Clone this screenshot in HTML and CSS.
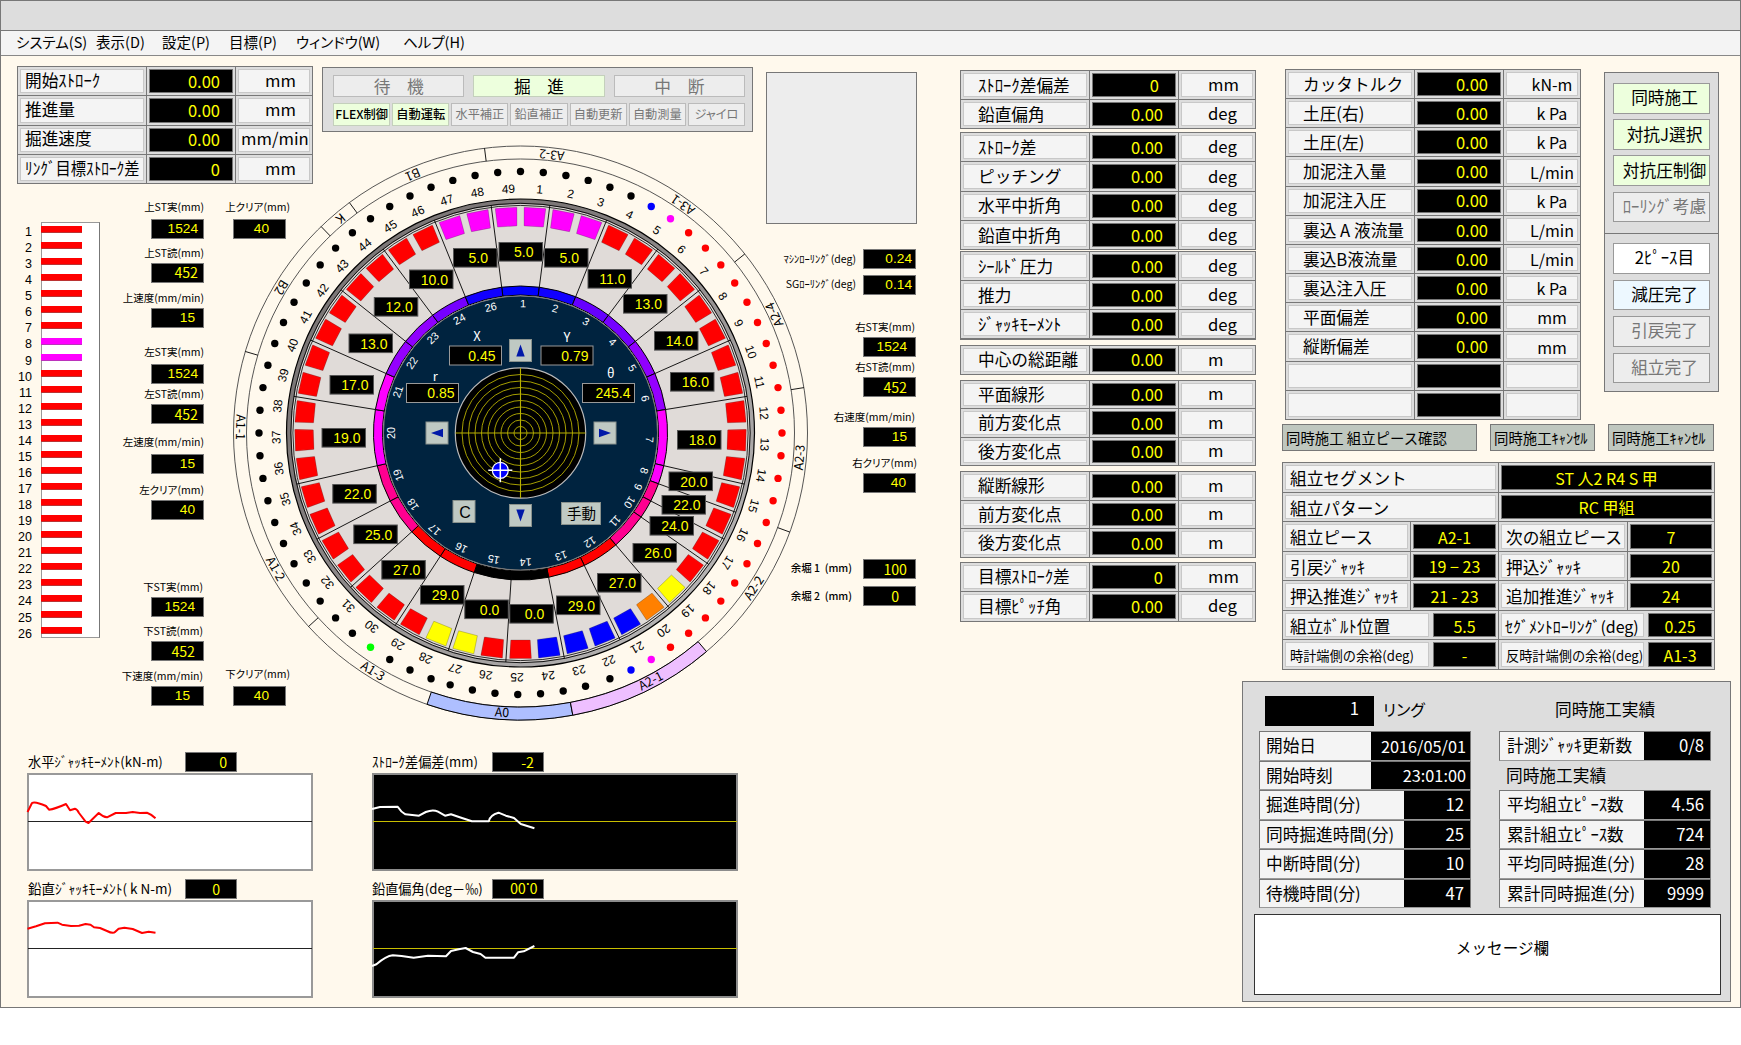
FILE: index.html
```html
<!DOCTYPE html>
<html lang="ja">
<head>
<meta charset="utf-8">
<title>掘進管理</title>
<link rel="stylesheet" href="styles.css">
</head>
<body>
<div class="app">
  <div class="titlebar"></div>
  <nav class="menubar">
    <span>システム(S)</span><span>表示(D)</span><span>設定(P)</span><span>目標(P)</span><span>ウィンドウ(W)</span><span>ヘルプ(H)</span>
  </nav>
  <main class="main">
    <section class="machine">
      <div class="top">
        <div class="table stroke-table">
          <div class="lbl">開始ｽﾄﾛｰｸ</div><div class="val">0.00</div><div class="unit">mm</div>
          <div class="lbl">推進量</div><div class="val">0.00</div><div class="unit">mm</div>
          <div class="lbl">掘進速度</div><div class="val">0.00</div><div class="unit wide">mm/min</div>
          <div class="lbl"><span class="condensed">ﾘﾝｸﾞ目標ｽﾄﾛｰｸ差</span></div><div class="val">0</div><div class="unit">mm</div>
        </div>
        <div class="status">
          <div class="status-modes">
            <div class="lamp">待　機</div><div class="lamp on">掘　進</div><div class="lamp">中　断</div>
          </div>
          <div class="status-flags">
            <div class="lamp on">FLEX制御</div><div class="lamp on">自動運転</div><div class="lamp">水平補正</div><div class="lamp">鉛直補正</div><div class="lamp">自動更新</div><div class="lamp">自動測量</div><div class="lamp">ジャイロ</div>
          </div>
        </div>
        <div class="blank-panel"></div>
      </div>
      <div class="middle">
        <div class="jacks">
          <div class="jack-numbers" id="jack-numbers"></div>
          <div class="jack-bars" id="jack-bars"></div>
        </div>
        <div class="readouts left">
          <div class="readout up"><label>上ST実(mm)</label><output>1524</output></div>
          <div class="readout"><label>上ST読(mm)</label><output class="alt">452</output></div>
          <div class="readout"><label>上速度(mm/min)</label><output class="in8">15</output></div>
          <div class="readout up"><label>左ST実(mm)</label><output>1524</output></div>
          <div class="readout"><label>左ST読(mm)</label><output class="alt">452</output></div>
          <div class="readout up"><label>左速度(mm/min)</label><output class="in8">15</output></div>
          <div class="readout"><label>左クリア(mm)</label><output class="in8">40</output></div>
          <div class="readout low"><label>下ST実(mm)</label><output class="in8">1524</output></div>
          <div class="readout low"><label>下ST読(mm)</label><output class="alt in8">452</output></div>
          <div class="readout low"><label>下速度(mm/min)</label><output class="in13">15</output></div>
        </div>
        <div class="readouts clear">
          <div class="readout up"><label>上クリア(mm)</label><output class="in17">40</output></div>
          <div class="readout up"><label>下クリア(mm)</label><output class="in17">40</output></div>
        </div>
        <svg class="dial" id="dial" width="576" height="576" viewBox="-288.5 -288 576 576"></svg>
        <div class="readouts right">
          <div class="inline-readout"><label>ﾏｼﾝﾛｰﾘﾝｸﾞ(deg)</label><output class="in4">0.24</output></div>
          <div class="inline-readout"><label>SGﾛｰﾘﾝｸﾞ(deg)</label><output class="in4">0.14</output></div>
          <div class="readout"><label>右ST実(mm)</label><output class="in8">1524</output></div>
          <div class="readout"><label>右ST読(mm)</label><output class="alt in8">452</output></div>
          <div class="readout"><label>右速度(mm/min)</label><output class="in8">15</output></div>
          <div class="readout far"><label>右クリア(mm)</label><output class="in10">40</output></div>
          <div class="inline-readout over"><label>余堀 1&nbsp; (mm)</label><output class="alt in8">100</output></div>
          <div class="inline-readout over"><label>余堀 2&nbsp; (mm)</label><output class="alt in17">0</output></div>
        </div>
      </div>
      <div class="charts">
        <figure class="chart light">
          <figcaption><span>水平ｼﾞｬｯｷﾓｰﾒﾝﾄ(kN-m)</span><output class="alt in10">0</output></figcaption>
          <svg viewBox="2 2 282 94"><path class="zero" d="M1 48.5H285"/><path class="trace" d="M.5 39L5 30Q8 28 19 33L22 36.7Q28 36 39 31L43 37.3L48 35.7Q50 36 52 40L58.6 48.7L61.5 50L71.7 40Q76 44 80 44.3L88.7 40H99L105.7 39L113 40L120 39.7Q124 41 128.5 45.3"/></svg>
        </figure>
        <figure class="chart dark">
          <figcaption><span>ｽﾄﾛｰｸ差偏差(mm)</span><output class="alt in10">-2</output></figcaption>
          <svg viewBox="2 2 362 94"><path class="zero" d="M1 48.5H365"/><path class="trace" d="M0 36L8 34L25.7 33.7Q29 39 33.4 41.3L47 42.7L53.8 39Q61 36 66 38.7L73 42.7L79 41.3L87.7 44.3L99.9 48.3H116.8Q118 42 126.5 39.7L133.8 42.7L142 45L148.8 51L162.4 55.3"/></svg>
        </figure>
        <figure class="chart light">
          <figcaption><span class="loose">鉛直ｼﾞｬｯｷﾓｰﾒﾝﾄ( k N-m)</span><output class="alt in17">0</output></figcaption>
          <svg viewBox="2 2 282 94"><path class="zero" d="M1 48.5H285"/><path class="trace" d="M.5 28.7L9 26.3L18 23.3L30.5 22.7L35 24.7L44 26L52 25.7L58.6 24L63.5 24.7L67 27.3L73 28L80 31Q86 34 88 32L91.6 28.7L97.4 27.7L105.7 29L115 33L121.7 31.7L128.5 32.7"/></svg>
        </figure>
        <figure class="chart dark">
          <figcaption><span>鉛直偏角(deg－‰)</span><output class="alt flipped">0.00</output></figcaption>
          <svg viewBox="2 2 362 94"><path class="zero" d="M1 48.5H365"/><path class="trace" d="M0 66L4.4 64.3Q14 56 20.8 55.3L29.6 56L41.7 57.7L56 55.7L74 56.3L79 51L86.8 49.3L93.6 48L101 52L108.6 54L113.4 57.7H142L146 52.3L151.7 51.3L162.4 46"/></svg>
        </figure>
      </div>
    </section>

    <section class="survey">
      <div class="table">
        <div class="lbl">ｽﾄﾛｰｸ差偏差</div><div class="val in19">0</div><div class="unit">mm</div>
        <div class="lbl">鉛直偏角</div><div class="val">0.00</div><div class="unit">deg</div>
      </div>
      <div class="table">
        <div class="lbl">ｽﾄﾛｰｸ差</div><div class="val">0.00</div><div class="unit">deg</div>
        <div class="lbl">ピッチング</div><div class="val">0.00</div><div class="unit">deg</div>
        <div class="lbl">水平中折角</div><div class="val">0.00</div><div class="unit">deg</div>
        <div class="lbl">鉛直中折角</div><div class="val">0.00</div><div class="unit">deg</div>
      </div>
      <div class="table">
        <div class="lbl">ｼｰﾙﾄﾞ圧力</div><div class="val">0.00</div><div class="unit">deg</div>
        <div class="lbl">推力</div><div class="val">0.00</div><div class="unit">deg</div>
        <div class="lbl">ｼﾞｬｯｷﾓｰﾒﾝﾄ</div><div class="val">0.00</div><div class="unit">deg</div>
      </div>
      <div class="table">
        <div class="lbl">中心の総距離</div><div class="val">0.00</div><div class="unit">m</div>
      </div>
      <div class="table">
        <div class="lbl">平面線形</div><div class="val">0.00</div><div class="unit">m</div>
        <div class="lbl">前方変化点</div><div class="val">0.00</div><div class="unit">m</div>
        <div class="lbl">後方変化点</div><div class="val">0.00</div><div class="unit">m</div>
      </div>
      <div class="table">
        <div class="lbl">縦断線形</div><div class="val">0.00</div><div class="unit">m</div>
        <div class="lbl">前方変化点</div><div class="val">0.00</div><div class="unit">m</div>
        <div class="lbl">後方変化点</div><div class="val">0.00</div><div class="unit">m</div>
      </div>
      <div class="table">
        <div class="lbl">目標ｽﾄﾛｰｸ差</div><div class="val">0</div><div class="unit">mm</div>
        <div class="lbl">目標ﾋﾟｯﾁ角</div><div class="val">0.00</div><div class="unit">deg</div>
      </div>
    </section>

    <section class="process">
      <div class="process-top">
        <div class="table cutter-table">
          <div class="lbl">カッタトルク</div><div class="val">0.00</div><div class="unit">kN-m</div>
          <div class="lbl">土圧(右)</div><div class="val">0.00</div><div class="unit">k Pa</div>
          <div class="lbl">土圧(左)</div><div class="val">0.00</div><div class="unit">k Pa</div>
          <div class="lbl">加泥注入量</div><div class="val">0.00</div><div class="unit">L/min</div>
          <div class="lbl">加泥注入圧</div><div class="val">0.00</div><div class="unit">k Pa</div>
          <div class="lbl">裏込 A 液流量</div><div class="val">0.00</div><div class="unit">L/min</div>
          <div class="lbl">裏込B液流量</div><div class="val">0.00</div><div class="unit">L/min</div>
          <div class="lbl">裏込注入圧</div><div class="val">0.00</div><div class="unit">k Pa</div>
          <div class="lbl">平面偏差</div><div class="val">0.00</div><div class="unit">mm</div>
          <div class="lbl">縦断偏差</div><div class="val">0.00</div><div class="unit">mm</div>
          <div class="lbl"></div><div class="val"></div><div class="unit"></div>
          <div class="lbl"></div><div class="val"></div><div class="unit"></div>
        </div>
        <div class="switches">
          <div class="switch-group">
            <div class="switch on">同時施工</div>
            <div class="switch on">対抗J選択</div>
            <div class="switch on">対抗圧制御</div>
            <div class="switch">ﾛｰﾘﾝｸﾞ考慮</div>
          </div>
          <div class="switch-group second">
            <div class="switch piece">2ﾋﾟｰｽ目</div>
            <div class="switch done">減圧完了</div>
            <div class="switch">引戻完了</div>
            <div class="switch">組立完了</div>
          </div>
        </div>
      </div>
      <div class="actions">
        <div class="action">同時施工 組立ピース確認</div>
        <div class="action">同時施工ｷｬﾝｾﾙ</div>
        <div class="action">同時施工ｷｬﾝｾﾙ</div>
      </div>
      <div class="assembly">
        <div class="arow wide"><div class="lbl">組立セグメント</div><div class="val">ST 人2 R4 S 甲</div></div>
        <div class="arow wide"><div class="lbl">組立パターン</div><div class="val">RC 甲組</div></div>
        <div class="arow"><div class="lbl">組立ピース</div><div class="val">A2-1</div><div class="lbl">次の組立ピース</div><div class="val">7</div></div>
        <div class="arow"><div class="lbl">引戻ｼﾞｬｯｷ</div><div class="val">19 − 23</div><div class="lbl">押込ｼﾞｬｯｷ</div><div class="val">20</div></div>
        <div class="arow"><div class="lbl">押込推進ｼﾞｬｯｷ</div><div class="val">21 - 23</div><div class="lbl">追加推進ｼﾞｬｯｷ</div><div class="val">24</div></div>
        <div class="arow long"><div class="lbl">組立ﾎﾞﾙﾄ位置</div><div class="val">5.5</div><div class="lbl tight">ｾｸﾞﾒﾝﾄﾛｰﾘﾝｸﾞ(deg)</div><div class="val">0.25</div></div>
        <div class="arow long"><div class="lbl small">時計端側の余裕(deg)</div><div class="val">-</div><div class="lbl small">反時計端側の余裕(deg)</div><div class="val">A1-3</div></div>
      </div>
      <div class="results">
        <div class="ring-head">
          <output class="ring-no">1</output><span class="ring-unit">リング</span><span class="ring-title">同時施工実績</span>
        </div>
        <div class="result-cols">
          <div class="rtable left">
            <div class="rrow date"><span>開始日</span><output>2016/05/01</output></div>
            <div class="rrow date"><span>開始時刻</span><output>23:01:00</output></div>
            <div class="rrow"><span>掘進時間(分)</span><output>12</output></div>
            <div class="rrow"><span>同時掘進時間(分)</span><output>25</output></div>
            <div class="rrow"><span>中断時間(分)</span><output>10</output></div>
            <div class="rrow"><span>待機時間(分)</span><output>47</output></div>
          </div>
          <div class="rtable right">
            <div class="rrow"><span>計測ｼﾞｬｯｷ更新数</span><output>0/8</output></div>
            <div class="rhead">同時施工実績</div>
            <div class="rrow"><span>平均組立ﾋﾟｰｽ数</span><output>4.56</output></div>
            <div class="rrow"><span>累計組立ﾋﾟｰｽ数</span><output>724</output></div>
            <div class="rrow"><span>平均同時掘進(分)</span><output>28</output></div>
            <div class="rrow"><span>累計同時掘進(分)</span><output>9999</output></div>
          </div>
        </div>
        <div class="message">メッセージ欄</div>
      </div>
    </section>
  </main>
</div>
<script src="dial.js"></script>
</body>
</html>
```
FILE: styles.css
```css
* { box-sizing: border-box; }

body {
  margin: 0;
  background: #fff;
  color: #000;
  font: 16.7px/1 "Noto Sans CJK JP", "Noto Sans", sans-serif;
}

.app {
  width: 1741px;
  height: 1008px;
  overflow: hidden;
  background: #fff9ed;
  border: 1px solid #777;
}

.titlebar { height: 30px; background: #ddd; border-bottom: 1px solid #777; }

.menubar {
  display: grid;
  grid-template-columns: 80px 66px 67px 67px 107px 80px;
  align-items: center;
  height: 25px;
  padding: 0 0 2px 15px;
  background: #f4f4f4;
  border-bottom: 1px solid #888;
  font-size: 14.5px;
  white-space: nowrap;
  font-feature-settings: "palt";
}

.main { display: flex; align-items: flex-start; height: 951px; }

/* label / value / unit tables */
.table {
  display: grid;
  grid-template-columns: 128px 88px 76px;
  grid-auto-rows: 1fr;
  gap: 1px;
  width: 296px;
  background: #777;
  border: 1px solid #777;
}
.lbl, .val, .unit {
  display: flex;
  align-items: center;
  min-width: 0;
  border: 2px solid #ddd;
  background: #f4f4f4;
  box-shadow: inset 0 0 0 1px #c8c8c8;
  white-space: nowrap;
}
.lbl { padding-left: 15px; }
.val {
  justify-content: flex-end;
  padding-right: 13px;
  background: #000;
  box-shadow: inset 0 0 0 1px #777;
  color: #ff0;
  font-size: 16.5px;
}
.val.in19 { padding-right: 17px; }
.unit { padding-left: 27px; }

/* left part */
.machine { width: 959px; padding-top: 10px; }
.top { display: flex; align-items: flex-start; height: 118px; padding-left: 16px; }
.stroke-table { height: 118px; }
.stroke-table .lbl { padding: 0 0 2px 5px; }
.stroke-table .unit { padding-bottom: 2px; }
.stroke-table .unit.wide { padding-left: 3px; }
.condensed { transform: scaleX(.915); transform-origin: left center; }

.status {
  width: 431px;
  height: 65px;
  margin: 1px 0 0 9px;
  padding: 7px 7px 0 10px;
  background: #ddd;
  border: 1px solid #777;
}
.status-modes { display: flex; gap: 9px; }
.status-modes .lamp { flex: 1; height: 22px; }
.status-flags { display: flex; gap: 2px; margin-top: 6px; font-size: 12.2px; }
.status-flags .lamp { flex: 1; height: 23px; font-feature-settings: "palt"; }
.lamp {
  display: flex;
  align-items: center;
  justify-content: center;
  min-width: 0;
  background: #ededed;
  border: 1px solid #bbb;
  color: #777;
  white-space: nowrap;
}
.lamp.on { background: #edffdd; color: #000; border-color: #c4d0bc; }
.status-flags .lamp.on { font-weight: 500; }

.blank-panel {
  width: 151px;
  height: 152px;
  margin: 6px 0 0 13px;
  background: #ededed;
  border: 1px solid #777;
}

.middle { display: flex; align-items: flex-start; height: 568px; padding-left: 16px; }
.jacks { display: flex; margin-top: 38px; width: 83px; }
.jack-numbers {
  width: 24px;
  padding: 2px 9px 0 0;
  text-align: right;
  font: 12.5px/16.06px "Liberation Sans", sans-serif;
}
.jack-bars { width: 59px; height: 416px; background: #fff; border: 1px solid #999; border-right-color: #777; }
.jack-bars div { height: 16.06px; padding-top: 3px; }
.jack-bars i { display: block; width: 41px; height: 7px; margin-left: -1px; background: #f00; border-bottom: 1px solid #b33; }
.jack-bars i.opp { background: #f0f; border-color: #b3b; }

.readouts { display: grid; align-content: start; font-size: 10.5px; }
.readouts label { white-space: nowrap; }
.readout { display: flex; flex-direction: column; align-items: flex-end; gap: 3px; height: 37px; }
.readout label { height: 14px; line-height: 13px; font-feature-settings: "palt"; }
.readout.up label { line-height: 10px; }
output { white-space: nowrap; }
.readouts output, .chart output {
  display: flex;
  align-items: center;
  justify-content: flex-end;
  width: 53px;
  height: 20px;
  padding-right: 5px;
  background: #000;
  border: 1px solid #777;
  color: #ff0;
  font: 13.7px/1 "Liberation Sans", sans-serif;
}
.readouts output.alt, .chart output.alt { font-family: "Noto Sans CJK JP", sans-serif; font-size: 14.2px; }
.readouts output.in4 { padding-right: 3px; }
.readouts output.in8 { padding-right: 8px; }
.readouts output.in10, .chart output.in10 { padding-right: 9px; }
.readouts output.in13 { padding-right: 13px; }
.readouts output.in17, .chart output.in17 { padding-right: 16px; }

.readouts.left {
  width: 104px;
  margin: 18px 1px 0 0;
  grid-template-rows: 43.5px 45.5px 55.5px 40.5px 49.5px 46px 97.5px 44px 45px 37px;
}
.readouts.left .low label { margin-right: 1px; }
.readouts.clear { width: 85px; margin-top: 18px; grid-template-rows: 467px 37px; }
.readouts.clear output { margin-right: 4px; }
.dial { flex: none; margin: -39px 0 0 -58px; font-family: "Liberation Sans", sans-serif; }
.readouts.right {
  width: 140px;
  margin: 65px 0 0 -32px;
  grid-template-rows: 25.5px 45.5px 40px 50px 46px 102.7px 27.3px 20px;
}
.readouts.right .readout label { margin-right: 1px; }
.readouts.right .far label { margin-right: -1px; }
.inline-readout { display: flex; align-items: center; justify-content: flex-end; gap: 7px; height: 20px; }
.inline-readout.over { gap: 11px; font-weight: 500; }

.charts {
  display: grid;
  grid-template-columns: 286px 366px;
  column-gap: 59px;
  row-gap: 8px;
  padding-left: 26px;
}
.chart { margin: 0; }
.chart figcaption { display: flex; align-items: center; height: 20px; margin-bottom: 1px; font-size: 13.2px; white-space: nowrap; }
.chart figcaption span { width: 158px; padding-left: 1px; }
.chart figcaption .loose { font-size: 13.5px; }
.chart.dark figcaption span { width: 120px; padding-left: 0; }
.chart output { width: 52px; }
.chart output.flipped { transform: rotate(180deg); padding-right: 17px; }
.chart svg { display: block; width: 100%; height: 98px; border: 2px solid #999; background: #fff; overflow: visible; }
.chart.dark svg { background: #000; border-color: #8c8c8c; }
.zero { stroke: #222; stroke-width: 1.2; fill: none; }
.dark .zero { stroke: #c8be00; }
.trace { fill: none; stroke: #f00; stroke-width: 2; stroke-linejoin: round; }
.dark .trace { stroke: #fff; }

/* survey column */
.survey { width: 296px; padding-top: 14px; }
.survey .table { margin-bottom: 4px; height: 30px; }
.survey .table:nth-child(1) { height: 59px; margin-bottom: 3px; }
.survey .table:nth-child(2) { height: 118px; margin-bottom: 1px; }
.survey .table:nth-child(3) { height: 88.5px; margin-bottom: 5px; }
.survey .table:nth-child(4) { margin-bottom: 5px; }
.survey .table:nth-child(5) { height: 86.5px; margin-bottom: 5px; }
.survey .table:nth-child(6) { height: 86.5px; margin-bottom: 4px; }
.survey .table:nth-child(7) { height: 60px; }
.survey .unit { padding-bottom: 1px; }

/* right part */
.process { width: 450px; margin-left: 26px; padding-top: 13px; }
.process-top { display: flex; align-items: flex-start; padding-left: 3px; }
.cutter-table { height: 351px; }
.cutter-table .unit { justify-content: center; padding-left: 20px; font-size: 16px; }

.switches { width: 115px; margin: 3px 0 0 23px; background: #ddd; border: 1px solid #777; height: 320px; }
.switch-group { display: flex; flex-direction: column; gap: 5.7px; padding: 10px 8px; height: 160px; }
.switch-group.second { border-top: 1px solid #777; padding-top: 9px; gap: 6px; }
.switch {
  display: flex;
  align-items: center;
  justify-content: center;
  flex: none;
  height: 30.5px;
  padding: 0 0 1px 6px;
  background: #ededed;
  border: 1px solid #999;
  color: #777;
  white-space: nowrap;
}
.switch.on { background: #edffdd; color: #000; }
.switch.piece { background: #fff; color: #000; }
.switch.done { background: #edf8ff; color: #000; }

.actions { display: grid; grid-template-columns: 195px 105px 106px; gap: 13px; margin-top: 4px; }
.actions .action {
  height: 27px;
  padding-left: 3px;
  line-height: 25px;
  font-size: 14.4px;
  white-space: nowrap;
  background: #bfc7bf;
  border: 1px solid #777;
}

.assembly {
  display: grid;
  grid-auto-rows: 1fr;
  gap: 1px;
  width: 433px;
  height: 208px;
  margin-top: 11px;
  background: #777;
  border: 1px solid #777;
}
.arow { display: grid; grid-template-columns: 127px 87px 128px 86px; gap: 1px; }
.arow.wide { grid-template-columns: 215px 215px; }
.assembly .lbl { padding: 2px 0 0 5px; }
.assembly .val { justify-content: center; padding: 1px 0 0; font-size: 16px; }
.arow.long { column-gap: 0; grid-template-columns: 148px 67px 148px 68px; }
.arow.long .lbl:nth-child(3) { margin-left: 1px; }
.assembly .lbl.small { font-size: 13.2px; }
.assembly .lbl.tight { font-size: 16px; padding-left: 4px; letter-spacing: -.05px; }

.results {
  width: 489px;
  height: 321px;
  margin: 11px 0 0 -40px;
  padding: 14px 0 0 11px;
  background: #ddd;
  border: 1px solid #777;
}
.ring-head { display: flex; align-items: center; height: 30px; padding-left: 11px; }
.ring-no { width: 109px; height: 30px; padding: 4px 15px 0 0; text-align: right; background: #000; color: #fff; }
.ring-unit { width: 181px; padding: 0 0 4px 9px; font-feature-settings: "palt"; font-size: 16px; }
.ring-title { padding-bottom: 4px; }
.result-cols { display: flex; gap: 28px; margin: 5px 0 0 5px; }
.rtable { display: grid; grid-auto-rows: 29.5px; width: 212px; }
.rrow { display: grid; grid-template-columns: 144px 1fr; border: 1px solid #777; border-bottom-color: #999; background: #f4f4f4; }
.rrow.date { grid-template-columns: 111px 1fr; }
.rtable span, .rhead { display: flex; align-items: center; padding-left: 7px; white-space: nowrap; }
.rtable.left span { padding-left: 6px; }
.rtable output { display: flex; align-items: center; justify-content: flex-end; padding-right: 6px; background: #000; color: #fff; }
.rtable .date output { padding-right: 4px; font-size: 16.3px; }
.message {
  display: flex;
  align-items: center;
  justify-content: center;
  width: 467px;
  height: 81px;
  margin: 6px 0 0 0;
  padding: 0 0 13px 30px;
  background: #fff;
  border: 1px solid #333;
  font-size: 15.6px;
}

/* dial */
.dial .glyph-jp { font-family: "Noto Sans CJK JP", sans-serif; }
```
FILE: dial.js
```js
// Jack stroke bars
const numbers = document.getElementById('jack-numbers');
const bars = document.getElementById('jack-bars');
for (let i = 1; i <= 26; i++) {
  numbers.insertAdjacentHTML('beforeend', `<div>${i}</div>`);
  bars.insertAdjacentHTML('beforeend', `<div><i class="${i === 8 || i === 9 ? 'opp' : ''}"></i></div>`);
}

// Dial: all geometry is relative to the shield centre, angles clockwise from the top
const STEP = 360 / 49;
const CX = 520.5, CY = 433;
const out = ['<defs><linearGradient id="rim" x1="0" y1="0" x2="1" y2="1"><stop offset=".3" stop-color="#7c7777"/><stop offset=".85" stop-color="#b4b2b2"/></linearGradient></defs>'];
const pt = (deg, r) => {
  const a = deg * Math.PI / 180;
  return [(r * Math.sin(a)).toFixed(2), (-r * Math.cos(a)).toFixed(2)];
};
const sector = (a, b, r1, r2, fill, extra = '') => {
  const p = [pt(a, r2), pt(b, r2), pt(b, r1), pt(a, r1)];
  out.push(`<path d="M${p[0]}A${r2} ${r2} 0 0 1 ${p[1]}L${p[2]}A${r1} ${r1} 0 0 0 ${p[3]}Z" fill="${fill}" ${extra}/>`);
};
const ray = (a, r1, r2) => {
  const p = pt(a, r1), q = pt(a, r2);
  out.push(`<path d="M${p}L${q}" stroke="#000" stroke-width=".9"/>`);
};
const ringText = (txt, deg, r, size, fill, flip = 0, cls = '') => {
  const p = pt(deg, r);
  out.push(`<text class="${cls}" transform="translate(${p}) rotate(${(deg + flip).toFixed(2)})" text-anchor="middle" dy=".36em" font-size="${size}" fill="${fill}">${txt}</text>`);
};
const circle = (r, fill, stroke, w = 1) =>
  out.push(`<circle r="${r}" fill="${fill}" stroke="${stroke}" stroke-width="${w}"/>`);

// Segment ring
circle(287, 'none', '#444', 0.9);
circle(274, 'none', '#444', 0.9);
sector(169.5, 199, 274, 287, '#aebfff', 'stroke="#000"');
sector(139.6, 169.5, 274, 287, '#eebfff', 'stroke="#000"');
[-7.2, -36.6, -44, 286.5, 227.6, 110.2, 80.9, 51.4].forEach(a => ray(a, 274, 287));
[['A3-2', 6.4], ['B1', -22.6], ['K', -40], ['B2', -58.7], ['A1-1', 271.2], ['A1-2', 241], ['A1-3', 211.8],
 ['A0', 183.8], ['A2-1', 152.3], ['A2-2', 123.6], ['A2-3', 95], ['A2-4', 65], ['A3-1', 35.4]]
  .forEach(([t, a]) => ringText(t, a, 280, 12.3, '#000', 180, 'glyph-jp'));

// Bolt holes
for (let a = 0; a < 360; a += 5) {
  let c = '#000';
  if (a === 30 || a === 155) c = '#00f';
  else if (a === 35 || a === 150) c = '#f0f';
  else if (a >= 40 && a <= 145) c = '#f00';
  else if (a === 215) c = '#0f0';
  const p = pt(a >= 165 && a <= 195 ? a + 0.6 : a, 261.5);
  out.push(`<circle cx="${p[0]}" cy="${p[1]}" r="3.7" fill="${c}"/>`);
}
for (let k = 1; k <= 49; k++) ringText(k, 4.5 + (k - 1) * STEP, 244.5, 12, '#000');

// Body
circle(231.5, '#e0dbd8', 'url(#rim)', 5);
circle(234, 'none', '#000', 1.2);
circle(229.7, 'none', '#000', 0.9);
circle(227.6, 'none', '#000', 0.8);

const segments = [
  [48, 50, '#00f', 1, 1.1], [1, 3, '#10f', 2, 15.5], [3, 5, '#60f', 3, 30.4], [5, 7, '#7500ff', 4, 45.3],
  [7, 9, '#9000ff', 5, 59.8], [9, 11, '#9500ff', 6, 74.5], [11, 14, '#f0f', 7, 93], [14, 15, '#f0f', 8, 107],
  [15, 16, '#ff0090', 9, 114.6], [16, 17, '#ff0090', 10, 122.4], [17, 19, '#ff0090', 11, 133],
  [19, 21, '#f00', 12, 147.5], [21, 23, '#f00', 13, 161.7], [23, 25, '#000', 14, 177.7], [25, 27, '#000', 15, 192],
  [27, 29, '#f00', 16, 207.3], [29, 31, '#f00', 17, 221.7], [31, 33, '#ff0090', 18, 236.4], [33, 35, '#ff0090', 19, 251],
  [35, 38, '#f0f', 20, 270], [38, 40, '#f0f', 21, 288.6], [40, 42, '#9500ff', 22, 302.8], [42, 44, '#9000ff', 23, 317.3],
  [44, 46, '#7500ff', 24, 331.8], [46, 48, '#10f', 26, 346.7]
];
segments.forEach(([s]) => ray(s * STEP, 147, 229.5));

// Jacks
const jackColor = k =>
  k <= 3 || k >= 47 ? '#f0f' : k === 19 || k === 27 || k === 28 ? '#ff0' : k === 20 ? '#ff8000' : k >= 21 && k <= 24 ? '#00f' : '#f00';
for (let k = 1; k <= 49; k++) {
  const a = ((k - 0.5) * STEP).toFixed(2);
  const shape = 'M-10.3 -225H10.3L9.2 -207.5H-9.2Z';
  out.push(`<path transform="rotate(${a})" d="${shape}" fill="${jackColor(k)}" stroke="${jackColor(k)}" stroke-width="1.2" stroke-linejoin="round"/>`);
  out.push(`<path transform="rotate(${a})" d="M-10.8 -225.500H10.800L9.700 -207H-9.700Z" fill="none" stroke="#444" stroke-opacity=".45" stroke-width=".6" stroke-linejoin="round"/>`);
}

// Pressure ring and inner disc
segments.forEach(([s, e, c]) => sector(s * STEP, e * STEP, 138, 147, c, 'stroke="#000" stroke-width="1"'));
circle(137, '#00233f', '#777', 1);
segments.forEach(([, , , n, a]) => ringText(n, a, 129.5, 10.8, '#fff'));

// Numeric boxes, page coordinates of the top left corner
const box = (x, y, w, h, txt, pad, border) => {
  const X = x - CX, Y = y - CY;
  out.push(`<rect x="${X}" y="${Y}" width="${w}" height="${h}" fill="#000" stroke="${border}" stroke-width="1"/>`);
  out.push(`<text x="${X + w - pad}" y="${Y + h / 2 + 5.2}" text-anchor="end" font-size="14" fill="#ff0">${txt}</text>`);
};
[[453.5, 248.5, '5.0', 9], [499, 242.5, '5.0', 9], [544.5, 248.5, '5.0', 9], [588, 269.5, '11.0', 6], [623.5, 294.5, '13.0', 5],
 [654.5, 331.5, '14.0', 5], [670.5, 372.5, '16.0', 5], [677.5, 430.5, '18.0', 5], [669, 472, '20.0', 5], [662, 495.5, '22.0', 5],
 [650, 516.5, '24.0', 5], [633, 543.5, '26.0', 5], [597.5, 573.5, '27.0', 5], [556.5, 596, '29.0', 5], [509.8, 604.5, '0.0', 9],
 [464.8, 600, '0.0', 9], [420.5, 585.5, '29.0', 5], [381.8, 560.5, '27.0', 5], [353.8, 525, '25.0', 5], [332.8, 484.5, '22.0', 5],
 [322, 428.5, '19.0', 5], [330, 375.5, '17.0', 5], [349, 334, '13.0', 5], [374.3, 297.5, '12.0', 5], [409.5, 270, '10.0', 5]]
  .forEach(([x, y, t, p]) => box(x, y, 43.5, 18.6, t, p, '#555'));
box(449.5, 346, 52, 19, '0.45', 6, '#999');
box(541, 346, 52, 19, '0.79', 4.5, '#999');
box(406.5, 383.5, 52, 19, '0.85', 4, '#999');
box(582.5, 383.5, 52, 19, '245.4', 4, '#999');
[['X', 477, 341], ['Y', 567, 342], ['r', 435.3, 380.5], ['θ', 610.7, 378]]
  .forEach(([t, x, y]) => out.push(`<text class="glyph-jp" x="${x - CX}" y="${y - CY}" text-anchor="middle" font-size="13" fill="#fff">${t}</text>`));

// Control buttons
const button = (x, y, w, h, inner) =>
  out.push(`<g transform="translate(${x - CX} ${y - CY})"><rect width="${w}" height="${h}" fill="#bfc9c3" stroke="#8a928d"/>${inner}</g>`);
button(509.5, 339.5, 22, 22, '<path d="M11 5L15.2 17H6.8Z" fill="#0018a8"/>');
button(509.5, 504.5, 22, 22, '<path d="M11 17L15.2 5H6.8Z" fill="#0018a8"/>');
button(426, 422, 22, 22, '<path d="M5 11L17 6.8V15.2Z" fill="#0018a8"/>');
button(594, 422, 22, 22, '<path d="M17 11L5 6.8V15.2Z" fill="#0018a8"/>');
button(453, 500.5, 22, 22, '<text x="12" y="17" text-anchor="middle" font-size="16">C</text>');
button(561.5, 502.5, 39, 22, '<text class="glyph-jp" x="20" y="16.5" text-anchor="middle" font-size="14.5">手動</text>');

// Position scope
circle(65.2, '#000', '#bbb', 1.2);
for (let r = 6.5; r < 60; r += 6.5) circle(r, 'none', '#b8b000', 0.9);
out.push('<path d="M-65 0H65M0 -65V65" stroke="#b8b000" stroke-width="1.1"/>');
out.push('<g transform="translate(-20.2 37.3)"><circle r="8" fill="#00f" stroke="#fff" stroke-width="1.2"/><path d="M-12 0H12M0 -12V12" stroke="#fff" stroke-width="1.5"/></g>');

document.getElementById('dial').innerHTML = out.join('');
```
